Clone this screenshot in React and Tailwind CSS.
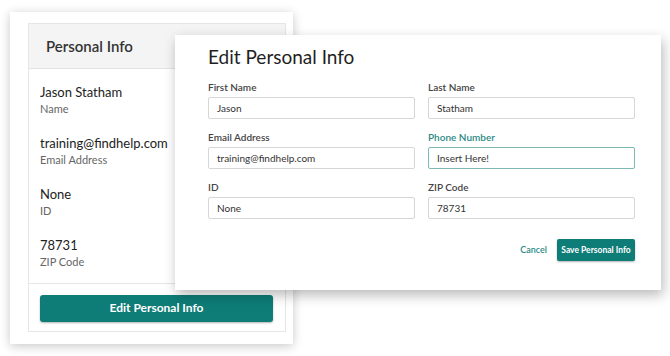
import React from 'react';

const font = { fontFamily: 'Lato, "Open Sans", sans-serif' };

const details = [
  { value: 'Jason Statham', label: 'Name' },
  { value: 'training@findhelp.com', label: 'Email Address' },
  { value: 'None', label: 'ID' },
  { value: '78731', label: 'ZIP Code' },
];

const Field = ({ label, value, active }) => (
  <div className="flex flex-col">
    <label
      className={`text-[10px] leading-[14px] font-semibold ${active ? 'text-[#2a8a84]' : 'text-[#444]'}`}
    >
      {label}
    </label>
    <div
      className={`mt-[3px] h-[22px] flex items-center px-2 rounded-[2px] bg-white text-[10px] text-[#333] border ${
        active ? 'border-[#7dbab5]' : 'border-[#d6d6d6]'
      }`}
    >
      {value}
    </div>
  </div>
);

const App = () => {
  return (
    <div className="relative w-[670px] h-[356px] bg-white overflow-hidden" style={font}>
      {/* Personal info card */}
      <div className="absolute left-[10px] top-[12px] w-[283px] h-[332px] bg-white pl-[18px] pr-[7px] pt-[11px] pb-[12px] shadow-[0_2px_10px_rgba(0,0,0,0.22)]">
        <div className="h-full flex flex-col border border-[#e6e6e6]">
          <div className="h-[45px] flex items-center px-[17px] bg-[#f4f4f4] border-b border-[#e3e3e3]">
            <span className="text-[15px] font-semibold text-[#333]">Personal Info</span>
          </div>
          <div className="flex flex-col gap-[17px] px-[11px] pt-[14px] pb-[13px] border-b border-[#e6e6e6]">
            {details.map((d) => (
              <div key={d.label} className="flex flex-col">
                <span className="text-[13px] leading-[18px] text-[#222]">{d.value}</span>
                <span className="text-[11px] leading-[16px] text-[#666]">{d.label}</span>
              </div>
            ))}
          </div>
          <div className="flex-1 px-[11px] pr-[12px] pt-[10px]">
            <button className="w-full h-[27px] rounded-[3px] bg-[#0e7c77] text-white text-[12px] font-bold shadow-[0_1px_2px_rgba(0,0,0,0.3)]">
              Edit Personal Info
            </button>
          </div>
        </div>
      </div>

      {/* Edit modal */}
      <div className="absolute left-[175px] top-[35px] w-[486px] h-[255px] bg-white pl-[33px] pr-[26px] pt-[10px] shadow-[2px_5px_12px_rgba(0,0,0,0.28)]">
        <h2 className="text-[19px] leading-[24px] text-[#1f1f1f]">Edit Personal Info</h2>
        <div className="mt-[11px] grid grid-cols-2 gap-x-[13px] gap-y-[11px]">
          <Field label="First Name" value="Jason" />
          <Field label="Last Name" value="Statham" />
          <Field label="Email Address" value="training@findhelp.com" />
          <Field label="Phone Number" value="Insert Here!" active />
          <Field label="ID" value="None" />
          <Field label="ZIP Code" value="78731" />
        </div>
        <div className="mt-[20px] flex items-center justify-end gap-[10px]">
          <span className="text-[9px] font-semibold text-[#2a8a84]">Cancel</span>
          <button className="h-[22px] w-[78px] rounded-[2px] bg-[#0e7c77] text-white text-[8.5px] font-bold shadow-[0_1px_2px_rgba(0,0,0,0.3)]">
            Save Personal Info
          </button>
        </div>
      </div>
    </div>
  );
};

export default App;
